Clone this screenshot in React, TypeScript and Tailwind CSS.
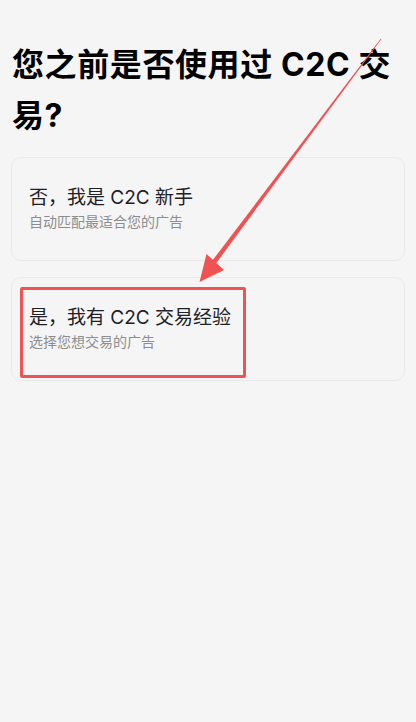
import React from "react";

const font = { fontFamily: 'Inter, "Noto Sans CJK SC", sans-serif' };

interface OptionProps {
  title: string;
  hint: string;
  children?: React.ReactNode;
}

const OptionCard = ({ title, hint, children }: OptionProps) => (
  <div className="relative h-[104px] rounded-[10px] border border-[#e9e9e9] bg-[#f5f5f5] px-[17px] flex flex-col justify-center">
    <div className="text-[19px] leading-[26px] text-[#1e2026]">{title}</div>
    <div className="text-[14px] leading-[22px] text-[#8d8d8d]">{hint}</div>
    {children}
  </div>
);

export default function App() {
  return (
    <div className="relative min-h-[722px] w-full bg-[#f5f5f5] overflow-hidden" style={font}>
      <div className="px-3 pt-[39px]">
        <h1 className="text-[32px] leading-[51px] font-bold tracking-[0.6px] text-black">
          您之前是否使用过 C2C 交易?
        </h1>
      </div>

      <div className="mt-[16px] px-[11px] flex flex-col gap-[16px]">
        <OptionCard title="否，我是 C2C 新手" hint="自动匹配最适合您的广告" />
        <OptionCard title="是，我有 C2C 交易经验" hint="选择您想交易的广告">
          {/* annotation box */}
          <div className="absolute left-[8px] top-[9px] w-[226px] h-[91px] border-[3px] border-[#ef5454] rounded-[2px]" />
        </OptionCard>
      </div>

      {/* annotation arrow */}
      <svg className="absolute left-0 top-0 pointer-events-none" width="416" height="722" viewBox="0 0 416 722">
        <polygon points="381.3,39.2 380.7,38.8 212.4,260.6 216,263.4" fill="#f05252" />
        <polygon points="199.5,282 206.5,254 224,270" fill="#f05252" />
      </svg>
    </div>
  );
}
